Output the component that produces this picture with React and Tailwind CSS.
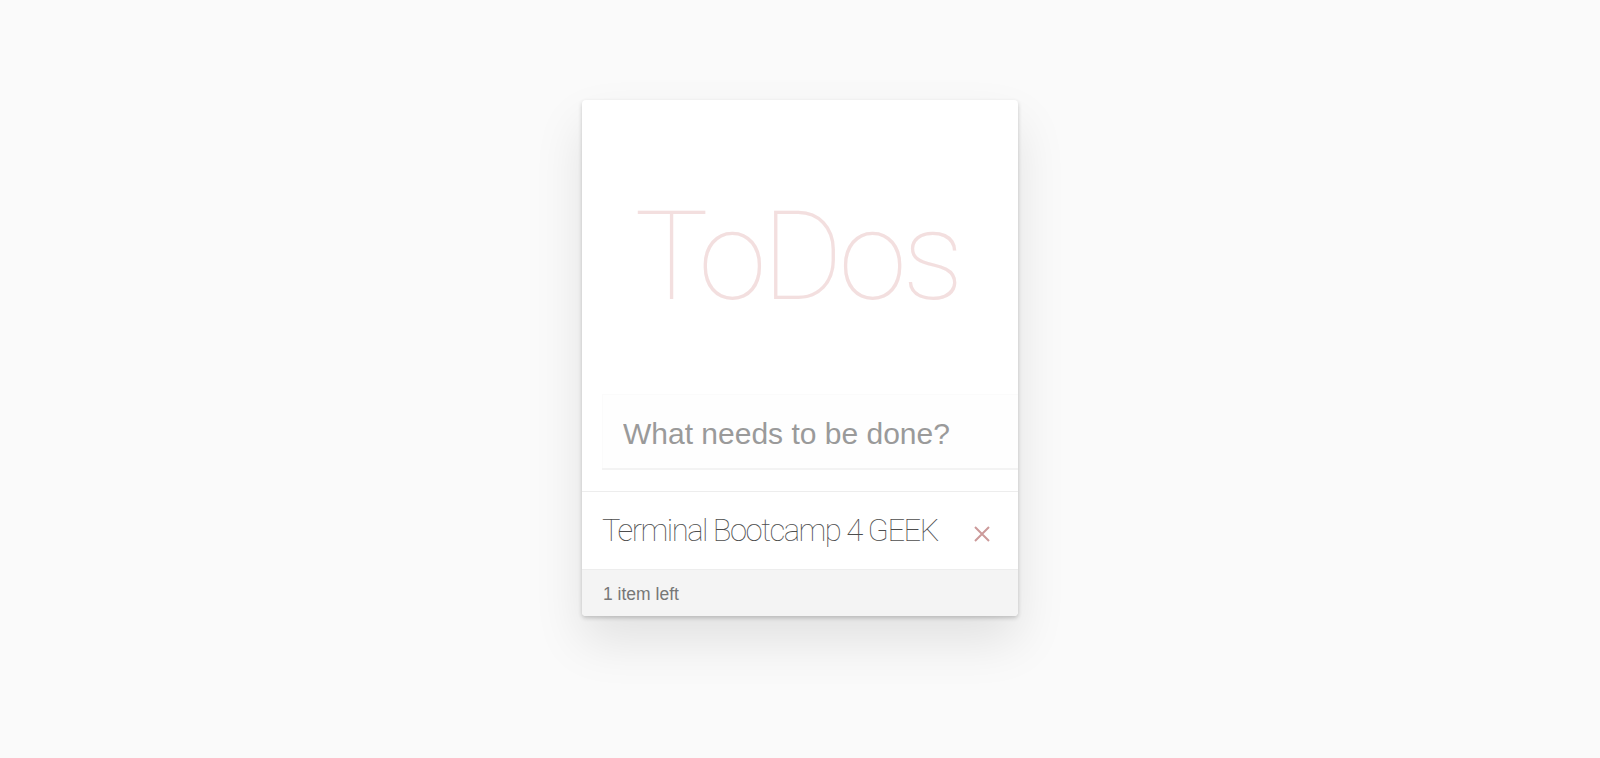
import { useState } from "react";

export default function App() {
  const [todos] = useState([{ id: 1, title: "Terminal Bootcamp 4 GEEK", done: false }]);
  const left = todos.filter((t) => !t.done).length;

  return (
    <div className="min-h-screen w-full bg-[#fafafa] flex justify-center pt-[100px]">
      <div className="w-[436px] h-fit bg-white rounded-[4px] shadow-[0_2px_4px_0_rgba(0,0,0,0.2),0_25px_50px_0_rgba(0,0,0,0.1)]">
        <div className="h-[294px] flex justify-center pt-[95px]">
          <h1 className="font-['Roboto',sans-serif] font-thin text-[124px] leading-[124px] text-[#f3dfdf] tracking-[-4.5px] pr-[6px]">
            ToDos
          </h1>
        </div>
        <div className="pl-5 mb-[21px]">
          <input
            className="w-full h-[76px] pl-[21px] pt-[5px] bg-[#fefefe] border-b-2 border-[#f3f3f3] shadow-[inset_1px_1px_0_rgba(0,0,0,0.012)] outline-none font-['Liberation_Sans',sans-serif] text-[30px] text-[#4d4d4d] placeholder:text-[#9a9a9a]"
            placeholder="What needs to be done?"
          />
        </div>
        <ul className="border-t border-[#ededed]">
          {todos.map((t) => (
            <li key={t.id} className="h-[78px] flex items-center pl-5 pr-7 border-b border-[#ededed]">
              <span className="flex-1 whitespace-nowrap font-['Roboto',sans-serif] font-thin text-[31px] tracking-[-1.5px] text-[#4d4d4d] pt-[2px]">
                {t.title}
              </span>
              <svg width="16" height="16" viewBox="0 0 16 16" className="mt-[6px]">
                <path d="M1 1L15 15M15 1L1 15" stroke="#cc9a9a" strokeWidth="2" />
              </svg>
            </li>
          ))}
        </ul>
        <div className="h-[46px] bg-[#f4f4f4] rounded-b-[4px] flex items-center pl-[21px] pt-[3px] font-['Liberation_Sans',sans-serif] text-[17.5px] text-[#777777]">
          {left} item{left === 1 ? "" : "s"} left
        </div>
      </div>
    </div>
  );
}
